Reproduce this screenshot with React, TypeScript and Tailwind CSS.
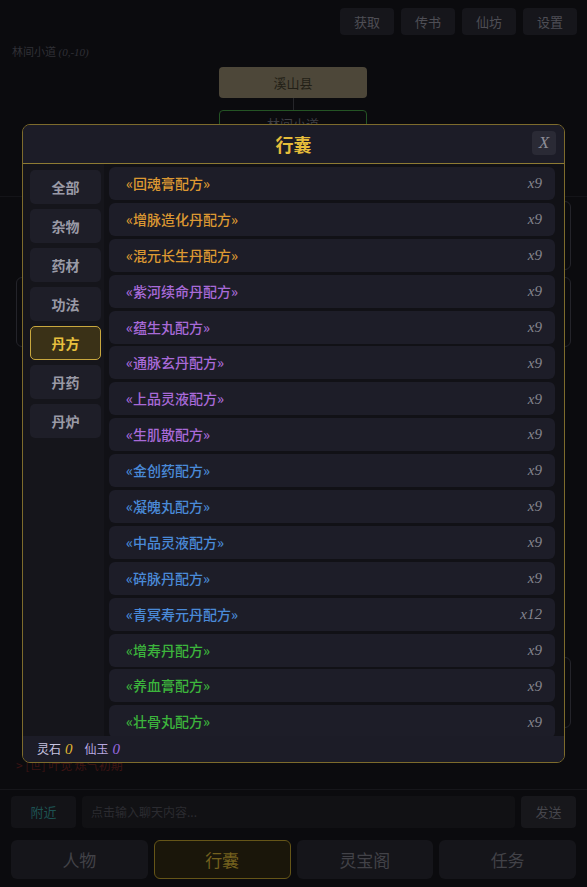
import React from "react";

const items: { name: string; color: string; count: string }[] = [
  { name: "«回魂膏配方»", color: "text-[#dc9832]", count: "x9" },
  { name: "«增脉造化丹配方»", color: "text-[#dc9832]", count: "x9" },
  { name: "«混元长生丹配方»", color: "text-[#dc9832]", count: "x9" },
  { name: "«紫河续命丹配方»", color: "text-[#a86ad8]", count: "x9" },
  { name: "«蕴生丸配方»", color: "text-[#a86ad8]", count: "x9" },
  { name: "«通脉玄丹配方»", color: "text-[#a86ad8]", count: "x9" },
  { name: "«上品灵液配方»", color: "text-[#a86ad8]", count: "x9" },
  { name: "«生肌散配方»", color: "text-[#a86ad8]", count: "x9" },
  { name: "«金创药配方»", color: "text-[#4a8ad8]", count: "x9" },
  { name: "«凝魄丸配方»", color: "text-[#4a8ad8]", count: "x9" },
  { name: "«中品灵液配方»", color: "text-[#4a8ad8]", count: "x9" },
  { name: "«碎脉丹配方»", color: "text-[#4a8ad8]", count: "x9" },
  { name: "«青冥寿元丹配方»", color: "text-[#4a8ad8]", count: "x12" },
  { name: "«增寿丹配方»", color: "text-[#3cb43c]", count: "x9" },
  { name: "«养血膏配方»", color: "text-[#3cb43c]", count: "x9" },
  { name: "«壮骨丸配方»", color: "text-[#3cb43c]", count: "x9" },
];

const tabs = ["全部", "杂物", "药材", "功法", "丹方", "丹药", "丹炉"];

export default function App() {
  return (
    <div className="relative h-[887px] w-[587px] overflow-hidden bg-[#0b0b0e] font-['Noto_Sans_CJK_SC',sans-serif]">
      <div className="flex h-full flex-col">
        {/* top bar */}
        <div className="flex h-[44px] justify-end gap-[7px] px-[10px] pt-[8px]">
          {["获取", "传书", "仙坊", "设置"].map((t) => (
            <div
              key={t}
              className="flex h-[27px] w-[54px] items-center justify-center rounded-[4px] bg-[#16161b] text-[13px] text-[#4e4e55]"
            >
              {t}
            </div>
          ))}
        </div>
        <div className="h-[16px] px-[12px] text-[11px] leading-[14px] text-[#303036]">
          林间小道 <span className="font-['Liberation_Serif',serif] italic">(0,-10)</span>
        </div>
        {/* map */}
        <div className="relative flex-1">
          <div className="absolute left-[219px] top-[7px] flex h-[31px] w-[148px] items-center justify-center rounded-[4px] bg-[#4d4739] text-[13px] text-[#221f16]">
            溪山县
          </div>
          <div className="absolute left-[293px] top-[38px] h-[12px] w-px bg-[#26262a]" />
          <div className="absolute left-[219px] top-[50px] flex h-[31px] w-[148px] items-start justify-center rounded-[4px] border border-[#245424] pt-[6px] text-[13px] leading-[14px] text-[#3e3e44]">
            林间小道
          </div>
          <div className="absolute left-[16px] top-[217px] h-[70px] w-[140px] rounded-[6px] border border-[#24242a]" />
          <div className="absolute left-[430px] top-[141px] h-[69px] w-[141px] rounded-[6px] border border-[#24242a]" />
          <div className="absolute left-[430px] top-[217px] h-[70px] w-[141px] rounded-[6px] border border-[#24242a]" />
          <div className="absolute left-[430px] top-[597px] h-[71px] w-[141px] rounded-[6px] border border-[#24242a]" />
          <div className="absolute left-0 top-[136px] h-px w-[587px] bg-[#141418]" />
        </div>
        {/* log line */}
        <div className="h-[37px] px-[16px] pt-[6px] text-[12px] leading-[14px] text-[#3e1414]">
          &gt; [世] 叶觉 炼气初期
        </div>
        {/* chat */}
        <div className="flex gap-[6px] border-t border-[#16161a] px-[11px] pt-[6px]">
          <div className="flex h-[32px] w-[65px] items-center justify-center rounded-[4px] bg-[#131317] text-[13px] text-[#1d5252]">
            附近
          </div>
          <div className="flex h-[32px] flex-1 items-center rounded-[4px] bg-[#111114] px-[9px] text-[12px] text-[#2b2b30]">
            点击输入聊天内容...
          </div>
          <div className="flex h-[32px] w-[55px] items-center justify-center rounded-[4px] bg-[#17171b] text-[13px] text-[#46464c]">
            发送
          </div>
        </div>
        {/* nav */}
        <div className="grid grid-cols-4 gap-[6px] px-[11px] pb-[8px] pt-[12px]">
          {["人物", "行囊", "灵宝阁", "任务"].map((t) => (
            <div
              key={t}
              className={
                t === "行囊"
                  ? "flex h-[39px] items-center justify-center rounded-[6px] border border-[#655518] bg-[#1a160a] text-[17px] text-[#73601e]"
                  : "flex h-[39px] items-center justify-center rounded-[6px] bg-[#15151a] text-[17px] text-[#424248]"
              }
            >
              {t}
            </div>
          ))}
        </div>
      </div>

      {/* modal */}
      <div className="absolute left-[22px] top-[124px] flex h-[639px] w-[543px] flex-col overflow-hidden rounded-[8px] border border-[#7d6b2c] bg-[#131318]">
        <div className="relative flex h-[39px] shrink-0 items-center justify-center border-b border-[#8e7b33] bg-[#1c1c27]">
          <span className="text-[18px] font-bold text-[#e6bd3a]">行囊</span>
          <div className="absolute right-[8px] top-[6px] flex h-[24px] w-[24px] items-center justify-center rounded-[4px] bg-[#2a2a35] font-['Liberation_Serif',serif] text-[17px] italic text-[#8c8c96]">
            X
          </div>
        </div>
        <div className="flex min-h-0 flex-1">
          <div className="flex w-[81px] shrink-0 flex-col gap-[5px] bg-[#15151b] pl-[7px] pt-[6px]">
            {tabs.map((t) => (
              <div
                key={t}
                className={
                  t === "丹方"
                    ? "flex h-[34px] w-[71px] items-center justify-center rounded-[5px] border border-[#c9a83e] bg-[#3a3117] text-[14px] font-bold text-[#e8c03e]"
                    : "flex h-[34px] w-[71px] items-center justify-center rounded-[5px] bg-[#1e1e28] text-[14px] font-bold text-[#9a9aa6]"
                }
              >
                {t}
              </div>
            ))}
          </div>
          <div className="flex min-h-0 flex-1 flex-col gap-[2.9px] overflow-hidden bg-[#111116] pl-[5px] pr-[9px] pt-[3px]">
            {items.map((it) => (
              <div
                key={it.name}
                className="flex h-[33px] shrink-0 items-center justify-between rounded-[6px] bg-[#1d1d28] pl-[17px] pr-[13px]"
              >
                <span className={`text-[14px] font-medium ${it.color}`}>{it.name}</span>
                <span className="font-['Liberation_Serif',serif] text-[15px] italic text-[#85858f]">
                  {it.count}
                </span>
              </div>
            ))}
          </div>
        </div>
        <div className="flex h-[26px] shrink-0 items-center gap-[4px] bg-[#1c1c27] pl-[14px] text-[12px]">
          <span className="text-[#c8c4e0]">灵石</span>
          <span className="font-['Liberation_Serif',serif] text-[15px] italic text-[#e0b832]">0</span>
          <span className="ml-[8px] text-[#b8a8e0]">仙玉</span>
          <span className="font-['Liberation_Serif',serif] text-[15px] italic text-[#9a6ae0]">0</span>
        </div>
      </div>
    </div>
  );
}
